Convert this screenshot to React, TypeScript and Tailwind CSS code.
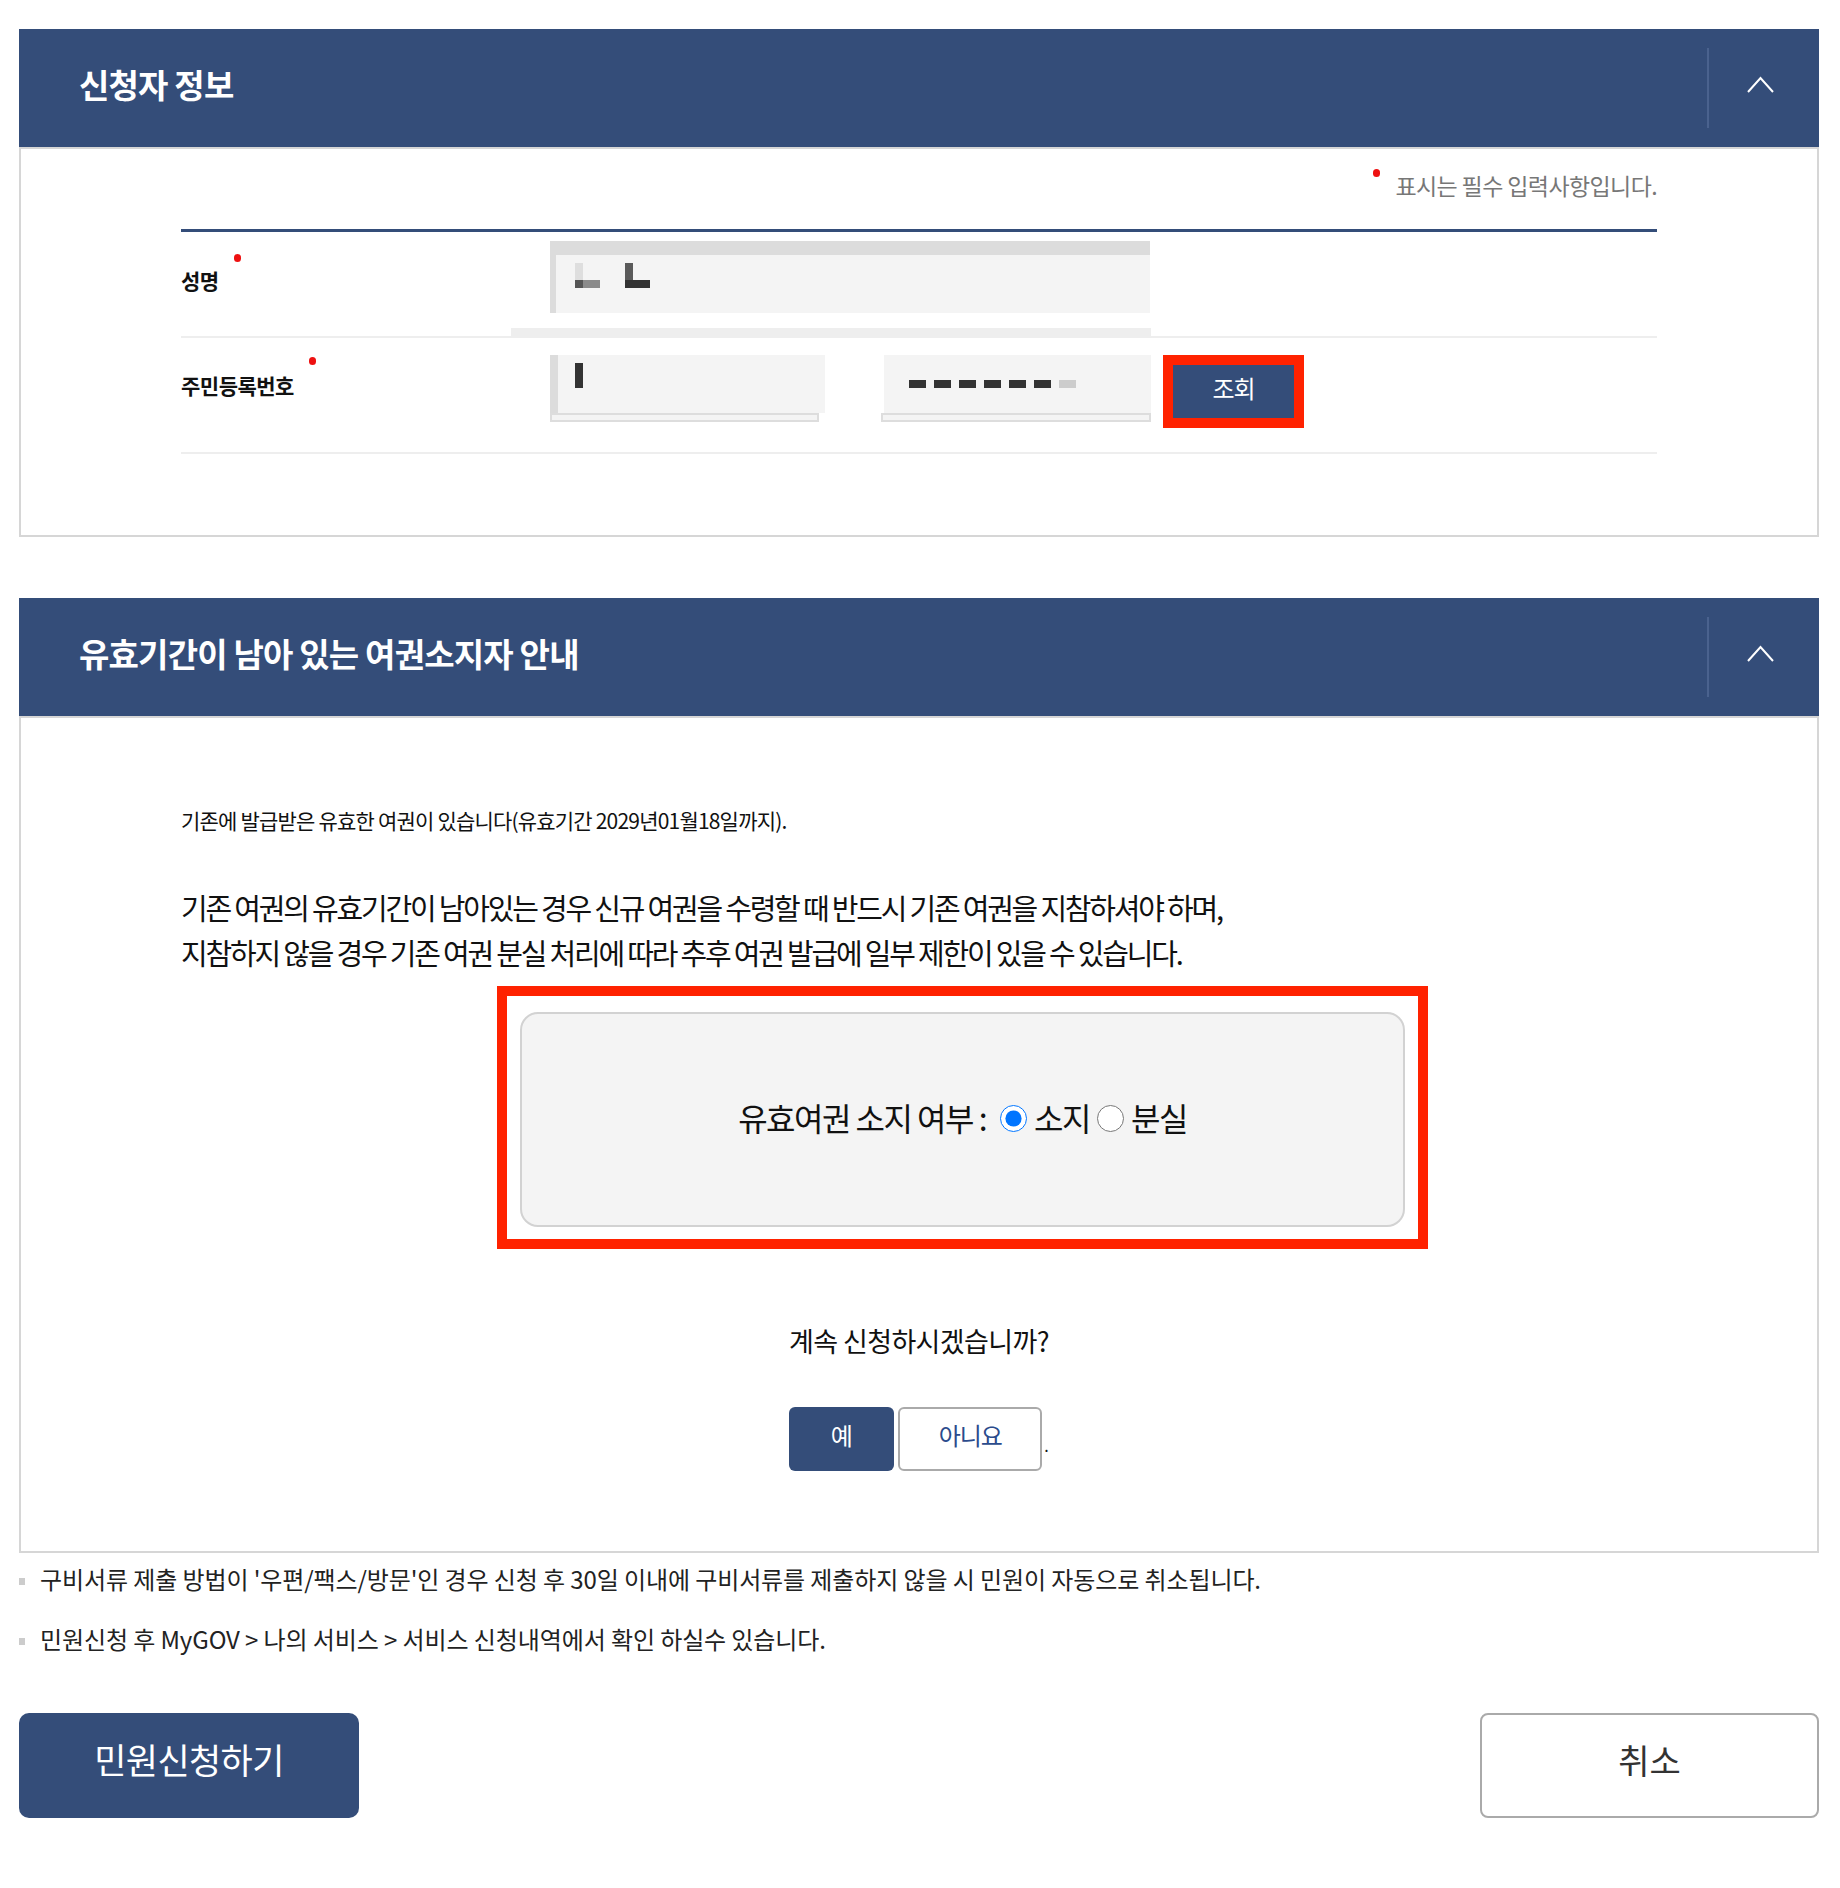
import React from 'react'

function Chevron() {
  return (
    <svg width="27" height="17" viewBox="0 0 27 17" fill="none">
      <polyline points="1,16 13.5,2 26,16" stroke="#ffffff" strokeWidth="2" />
    </svg>
  )
}

function PanelHeader({ title }: { title: string }) {
  return (
    <div className="flex h-[118px] items-center bg-[#344d79] pl-[60px]">
      <h2 className="mb-[8px] flex-1 text-[33px] font-bold leading-none tracking-[-0.8px] text-white">
        {title}
      </h2>
      <div className="h-[80px] w-[2px] bg-[#4a628e]" />
      <div className="mb-[8px] flex w-[110px] items-center pl-[38px]">
        <Chevron />
      </div>
    </div>
  )
}

function Required({ children }: { children: React.ReactNode }) {
  return (
    <span className="relative text-[21px] font-bold leading-[26px] tracking-[-0.5px] text-[#111]">
      {children}
      <span className="absolute -right-[22px] -top-[13px] h-[8px] w-[7px] rounded-full bg-[#ee1111]" />
    </span>
  )
}

function MaskGlyph({ light, dark }: { light: string; dark: string }) {
  return (
    <div className="flex flex-col">
      <div className={`h-[17px] w-[8px] ${light}`} />
      <div className="flex">
        <div className={`h-[8px] w-[8px] ${dark}`} />
        <div className={`h-[8px] w-[17px] ${light === 'bg-[#dedede]' ? 'bg-[#8a8a8a]' : dark}`} />
      </div>
    </div>
  )
}

export default function App() {
  return (
    <div className="h-[1888px] w-[1840px] bg-white pl-[19px] pt-[29px] font-['Noto_Sans_CJK_KR',sans-serif] text-[#111]">
      <div className="w-[1800px]">
        {/* 신청자 정보 */}
        <section>
          <PanelHeader title="신청자 정보" />
          <div className="h-[390px] border-2 border-[#d6d6d6] px-[160px]">
            <div className="flex h-[80px] items-start justify-end pt-[24px]">
              <span className="mr-[15px] mt-[-4px] h-[8px] w-[7px] rounded-full bg-[#ee1111]" />
              <span className="text-[23px] leading-[24px] tracking-[-0.6px] text-[#777]">
                표시는 필수 입력사항입니다.
              </span>
            </div>
            <div className="h-[3px] bg-[#344d79]" />

            {/* 성명 */}
            <div className="flex h-[106px] flex-col border-b-2 border-[#eeeeee]">
              <div className="flex h-[96px]">
                <div className="flex w-[369px] items-center">
                  <Required>성명</Required>
                </div>
                <div className="pt-[9px]">
                  <div className="flex h-[72px] w-[600px] items-start gap-[25px] border-l-[6px] border-t-[14px] border-[#dcdcdc] bg-[#f4f4f4] pl-[19px] pt-[8px]">
                    <MaskGlyph light="bg-[#dedede]" dark="bg-[#555555]" />
                    <MaskGlyph light="bg-[#5a5a5a]" dark="bg-[#333333]" />
                  </div>
                </div>
              </div>
              <div className="ml-[330px] h-[8px] w-[640px] bg-[#eeeeee]" />
            </div>

            {/* 주민등록번호 */}
            <div className="flex h-[116px] items-start border-b-2 border-[#eeeeee]">
              <div className="mt-[34px] w-[369px]">
                <Required>주민등록번호</Required>
              </div>
              <div className="mt-[17px] flex flex-col">
                <div className="flex h-[58px] w-[275px] items-start border-l-[8px] border-[#dcdcdc] bg-[#f4f4f4] pl-[17px] pt-[8px]">
                  <div className="h-[25px] w-[8px] bg-[#333333]" />
                </div>
                <div className="h-[9px] w-[269px] border-2 border-[#dddddd] bg-[#f4f4f4]" />
              </div>
              <div className="ml-[56px] mt-[17px] flex flex-col items-end">
                <div className="flex h-[58px] w-[267px] items-center gap-[8px] bg-[#f4f4f4] pl-[25px]">
                  <div className="h-[8px] w-[17px] bg-[#333333]" />
                  <div className="h-[8px] w-[17px] bg-[#333333]" />
                  <div className="h-[8px] w-[17px] bg-[#333333]" />
                  <div className="h-[8px] w-[17px] bg-[#333333]" />
                  <div className="h-[8px] w-[17px] bg-[#333333]" />
                  <div className="h-[8px] w-[17px] bg-[#333333]" />
                  <div className="h-[8px] w-[17px] bg-[#cccccc]" />
                </div>
                <div className="h-[9px] w-[270px] border-2 border-[#dddddd] bg-[#f4f4f4]" />
              </div>
              <div className="ml-[12px] mt-[17px] border-[10px] border-[#ff2200]">
                <button
                  type="button"
                  className="flex h-[53px] w-[121px] items-center justify-center bg-[#344d79] pb-[8px] text-[24px] tracking-[-1px] text-white"
                >
                  조회
                </button>
              </div>
            </div>
          </div>
        </section>

        {/* 유효기간이 남아 있는 여권소지자 안내 */}
        <section className="mt-[61px]">
          <PanelHeader title="유효기간이 남아 있는 여권소지자 안내" />
          <div className="border-2 border-[#d6d6d6] px-[160px] pb-[80px] pt-[88px]">
            <p className="text-[21px] leading-[28px] tracking-[-0.8px] text-[#111]">
              기존에 발급받은 유효한 여권이 있습니다(유효기간 2029년01월18일까지).
            </p>
            <p className="mt-[51px] text-[29px] leading-[45px] tracking-[-2.2px] text-[#111]">
              기존 여권의 유효기간이 남아있는 경우 신규 여권을 수령할 때 반드시 기존 여권을 지참하셔야 하며,
              <br />
              지참하지 않을 경우 기존 여권 분실 처리에 따라 추후 여권 발급에 일부 제한이 있을 수 있습니다.
            </p>

            <div className="ml-[316px] mt-[11px] w-[931px] border-[10px] border-[#ff2200] bg-white pb-[12px] pl-[13px] pr-[13px] pt-[16px]">
              <div className="flex h-[215px] items-center justify-center rounded-[18px] border-2 border-[#d2d2d2] bg-[#f4f4f4]">
                <div className="mb-[6px] flex items-center text-[32px] leading-[40px] tracking-[-1.5px] text-[#111]">
                  <span>유효여권 소지 여부 :</span>
                  <input
                    type="radio"
                    name="own"
                    defaultChecked
                    className="ml-[14px] mr-[7px] mt-[4px] h-[27px] w-[27px] accent-[#0075ff]"
                  />
                  <span>소지</span>
                  <input
                    type="radio"
                    name="own"
                    className="ml-[7px] mr-[7px] mt-[4px] h-[27px] w-[27px] accent-[#0075ff]"
                  />
                  <span>분실</span>
                </div>
              </div>
            </div>

            <p className="mt-[75px] text-center text-[27px] leading-[34px] tracking-[-0.6px] text-[#111]">
              계속 신청하시겠습니까?
            </p>
            <div className="mt-[49px] flex items-end justify-center">
              <button
                type="button"
                className="flex h-[64px] w-[105px] items-center justify-center rounded-[6px] bg-[#344d79] pb-[8px] text-[24px] text-white"
              >
                예
              </button>
              <button
                type="button"
                className="ml-[4px] flex h-[64px] w-[144px] items-center justify-center rounded-[6px] border-2 border-[#aaaaaa] bg-white pb-[8px] text-[24px] tracking-[-1px] text-[#2b4b8c]"
              >
                아니요
              </button>
              <span className="mb-[18px] ml-[2px] text-[16px] leading-none">.</span>
            </div>
          </div>
        </section>

        {/* notes */}
        <ul className="mt-[10px] text-[24px] leading-[32px] tracking-[-0.1px] text-[#222]">
          <li className="flex items-center">
            <span className="mr-[15px] mt-[4px] h-[7px] w-[6px] bg-[#cccccc]" />
            구비서류 제출 방법이 '우편/팩스/방문'인 경우 신청 후 30일 이내에 구비서류를 제출하지 않을 시 민원이 자동으로 취소됩니다.
          </li>
          <li className="mt-[28px] flex items-center">
            <span className="mr-[15px] mt-[4px] h-[7px] w-[6px] bg-[#cccccc]" />
            민원신청 후 MyGOV &gt; 나의 서비스 &gt; 서비스 신청내역에서 확인 하실수 있습니다.
          </li>
        </ul>

        <div className="mt-[58px] flex justify-between">
          <button
            type="button"
            className="flex h-[105px] w-[340px] items-center justify-center rounded-[10px] bg-[#344d79] pb-[12px] text-[35px] tracking-[-0.6px] text-white"
          >
            민원신청하기
          </button>
          <button
            type="button"
            className="flex h-[105px] w-[339px] items-center justify-center rounded-[8px] border-2 border-[#aaaaaa] bg-white pb-[12px] text-[34px] tracking-[0px] text-[#333]"
          >
            취소
          </button>
        </div>
      </div>
    </div>
  )
}
